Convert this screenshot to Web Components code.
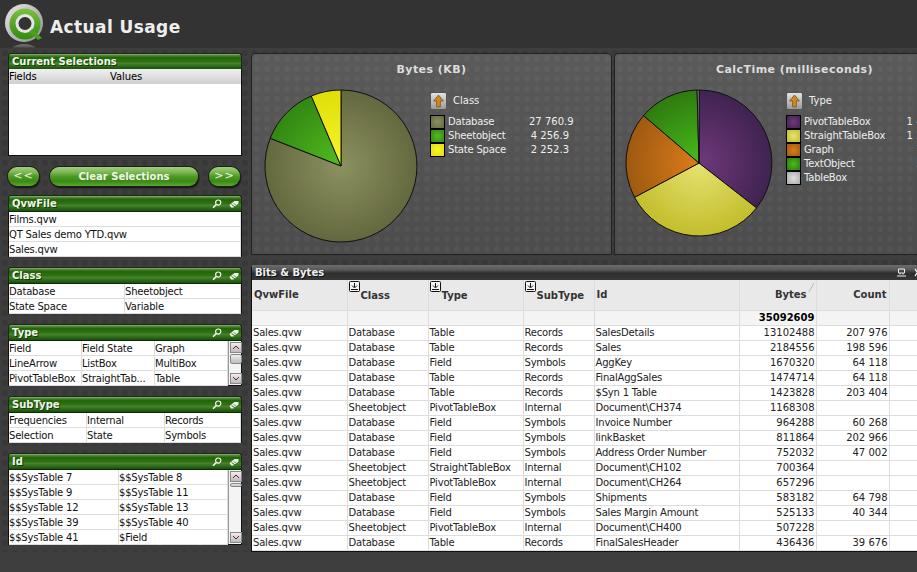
<!DOCTYPE html>
<html>
<head>
<meta charset="utf-8">
<title>Actual Usage</title>
<style>
  html, body { margin: 0; height: 100%; overflow: hidden; background: #3e3e3e; }
  body { font: 10px "DejaVu Sans", sans-serif; color: #000; }
</style>
</head>
<body>
<qv-app>
  <qv-topbar slot="top">Actual Usage</qv-topbar>

  <qv-selections slot="left"></qv-selections>
  <qv-buttons slot="left"></qv-buttons>

  <qv-listbox slot="left" columns="1fr" label="QvwFile">
    <span>Films.qvw</span><span>QT Sales demo YTD.qvw</span><span>Sales.qvw</span>
  </qv-listbox>
  <qv-listbox slot="left" columns="116px 1fr" label="Class" style="margin-top:10px">
    <span>Database</span><span>Sheetobject</span><span>State Space</span><span>Variable</span>
  </qv-listbox>
  <qv-listbox slot="left" columns="73px 73px 1fr" label="Type" scroll="type" style="margin-top:10px">
    <span>Field</span><span>Field State</span><span>Graph</span>
    <span>LineArrow</span><span>ListBox</span><span>MultiBox</span>
    <span>PivotTableBox</span><span>StraightTab...</span><span>Table</span>
  </qv-listbox>
  <qv-listbox slot="left" columns="78px 78px 1fr" label="SubType" style="margin-top:10px">
    <span>Frequencies</span><span>Internal</span><span>Records</span>
    <span>Selection</span><span>State</span><span>Symbols</span>
  </qv-listbox>
  <qv-listbox slot="left" columns="110px 1fr" label="Id" scroll="id" style="margin-top:10px">
    <span>$$SysTable 7</span><span>$$SysTable 8</span>
    <span>$$SysTable 9</span><span>$$SysTable 11</span>
    <span>$$SysTable 12</span><span>$$SysTable 13</span>
    <span>$$SysTable 39</span><span>$$SysTable 40</span>
    <span>$$SysTable 41</span><span>$Field</span>
  </qv-listbox>

  <qv-charts slot="right">
    <qv-pie label="Bytes (KB)" dim="Class" cx="89" cy="112" r="76" gap="13" nw="81" vw="40"
      slices='[["Database",0,291.4,"#8c9160","#64683e"],["Sheetobject",291.4,337,"#52bc20","#328712"],["State Space",337,360,"#f8f62e","#e0dd0a"]]'
      values="27 760.9|4 256.9|2 252.3"></qv-pie>
    <qv-pie label="CalcTime (milliseconds)" dim="Type" cx="84" cy="109" r="73" gap="14" nw="102.5" vw="51"
      slices='[["PivotTableBox",0,128,"#70387c","#3f2350"],["StraightTableBox",128,242,"#e6e272","#c2be2c"],["Graph",242,310.5,"#dc7c1a","#9e5a10"],["TextObject",310.5,358.5,"#48bc1a","#2f7a10"],["TableBox",358.5,360,"#e0e0e0","#a8a8a8"]]'
      values="1 438 226|1 226 508|742 118|512 930|"></qv-pie>
  </qv-charts>
  <qv-table slot="right" label="Bits &amp; Bytes"></qv-table>
</qv-app>

<script>
const STAR_BG = `radial-gradient(circle at 5px 5px, rgba(255,255,255,.035) 2.5px, transparent 3.5px) 0 0/10px 10px`;

const ICONS = {
  search: `<svg width="10" height="10" viewBox="0 0 10 10"><circle cx="6.2" cy="3.6" r="2.6" fill="none" stroke="#f2f6ee" stroke-width="1.2"/><path d="M4.2 5.6 1 8.8" stroke="#f2f6ee" stroke-width="1.6"/></svg>`,
  eraser: `<svg width="12" height="10" viewBox="0 0 11 10"><path d="M1 6 6 2h4v2.5L5 8.5H2.5z" fill="#f2f6ee"/><path d="M3 5.4 6.5 8" stroke="#2c6a10" stroke-width="1"/><path d="M5 4.4l3 2" stroke="#2c6a10" stroke-width=".7"/></svg>`
};

class QvApp extends HTMLElement {
  constructor() {
    super();
    this.attachShadow({ mode: 'open' });
    this.shadowRoot.innerHTML = `
      <style>
        :host { display: grid; grid-template-rows: 48px 1fr; width: 917px; height: 572px; overflow: hidden; background: #3e3e3e; }
        .main { display: flex; align-items: flex-start; padding-top: 5px; height: 499px;
                background: radial-gradient(circle at 5px 5px, rgba(0,0,0,.1) 2.5px, transparent 3.5px) 0 0/10px 10px; }
        .left { flex: 0 0 234px; width: 234px; margin-left: 8px; display: flex; flex-direction: column; }
        .right { flex: 0 0 700px; width: 700px; margin-left: 9px; display: flex; flex-direction: column; }
      </style>
      <slot name="top"></slot>
      <div class="main">
        <div class="left"><slot name="left"></slot></div>
        <div class="right"><slot name="right"></slot></div>
      </div>`;
  }
}

class QvTopbar extends HTMLElement {
  constructor() {
    super();
    this.attachShadow({ mode: 'open' });
    this.shadowRoot.innerHTML = `
      <style>
        :host { display: flex; align-items: flex-start; height: 48px; background: #333; overflow: hidden; }
        svg { flex: none; margin: 4px 0 0 5px; }
        .t { margin: 15px 0 0 6px; font: bold 17px/24px "DejaVu Sans", sans-serif; color: #eee; letter-spacing: .4px; }
      </style>
      <svg width="39" height="44" viewBox="0 0 39 44">
        <defs>
          <linearGradient id="ring" x1="0" y1="0" x2="1" y2="1"><stop offset="0" stop-color="#e8e8e8"/><stop offset="1" stop-color="#8e8e8e"/></linearGradient>
          <linearGradient id="gr" x1="0" y1="0" x2="0" y2="1"><stop offset="0" stop-color="#7cc142"/><stop offset="1" stop-color="#2f8a12"/></linearGradient>
          <linearGradient id="refl" x1="0" y1="0" x2="0" y2="1"><stop offset="0" stop-color="#999"/><stop offset="1" stop-color="#444"/></linearGradient>
        </defs>
        <path d="M7 44a13 6 0 0 1 24 0z" fill="url(#refl)" opacity=".75"/>
        <circle cx="19" cy="19" r="19" fill="url(#ring)"/>
        <circle cx="20" cy="20" r="15.5" fill="url(#gr)"/>
        <circle cx="20" cy="19.5" r="9.5" fill="#e4e4e4"/>
        <circle cx="20" cy="19.5" r="6.5" fill="#333"/>
        <path d="M27 25l10 9-4 2-9-8z" fill="#4d9e22"/>
      </svg>
      <div class="t"><slot></slot></div>`;
  }
}

class QvCaption extends HTMLElement {
  constructor() {
    super();
    this.attachShadow({ mode: 'open' });
    this.shadowRoot.innerHTML = `
      <style>
        :host { display: flex; align-items: center; height: 15px; padding: 0 1px 0 3px; border-radius: 3px 3px 0 0;
                border: 1px solid #1a2a12; border-bottom: 0; box-sizing: content-box;
                background: linear-gradient(#9ab98a 0, #55893a 8%, #24640a 24%, #2f7113 50%, #46842c 62%, #17500a 100%); }
        .t { flex: 1; font: bold 10px/15px "DejaVu Sans", sans-serif; color: #f0f4ea; text-shadow: 1px 1px 0 #123b05; white-space: nowrap; }
        .i { display: none; gap: 6px; align-items: center; height: 15px; }
        :host([icons]) .i { display: flex; }
      </style>
      <div class="t"><slot></slot></div>
      <div class="i">${ICONS.search}${ICONS.eraser}</div>`;
  }
}

class QvSelections extends HTMLElement {
  constructor() {
    super();
    this.attachShadow({ mode: 'open' });
    this.shadowRoot.innerHTML = `
      <style>
        :host { display: block; }
        .body { height: 86px; background: #fff; border: 1px solid #111; border-top: 0; }
        .head { display: grid; grid-template-columns: 101px 1fr; height: 15px; padding-left: 0;
                background: linear-gradient(#f0f0f0, #cfcfcf); font: 10px/16px "DejaVu Sans", sans-serif; color: #000; letter-spacing: -.1px; }
      </style>
      <qv-caption>Current Selections</qv-caption>
      <div class="body"><div class="head"><span>Fields</span><span>Values</span></div></div>`;
  }
}

class QvButtons extends HTMLElement {
  constructor() {
    super();
    this.attachShadow({ mode: 'open' });
    this.shadowRoot.innerHTML = `
      <style>
        :host { display: grid; grid-template-columns: 31px 148px 31px; gap: 11px; margin: 11px 0 9px; }
        div { height: 19px; border-radius: 9px; text-align: center; color: #f0f6ea; font: bold 10px/19px "DejaVu Sans", sans-serif;
              box-shadow: 0 0 0 1px #1c1c1c, 1px 2px 2px #111;
              background: linear-gradient(#a3cf7f 0, #7ab452 30%, #4c9a22 50%, #3a8a16 75%, #5aa830 100%); }
        .arr { font: 11px/18px "DejaVu Sans", sans-serif; letter-spacing: 1px; }
      </style>
      <div class="arr">&lt;&lt;</div><div>Clear Selections</div><div class="arr">&gt;&gt;</div>`;
  }
}

class QvScrollbar extends HTMLElement {
  constructor() {
    super();
    this.attachShadow({ mode: 'open' });
    const thumb = this.getAttribute('kind') === 'id' ? 'top:13px;height:2px' : 'top:13px;height:8px';
    const btn = d => `<svg width="10" height="9" viewBox="0 0 10 9"><path d="${d}" fill="none" stroke="#7a1c1c" stroke-width="1"/></svg>`;
    this.shadowRoot.innerHTML = `
      <style>
        :host { display: block; position: relative; background: #f4f4f4; border-left: 1px solid #999; box-sizing: border-box; }
        .b { position: absolute; left: 1px; width: 10px; height: 9px; border: 1px solid #888; background: linear-gradient(#eee, #bbb); display: flex; }
        .u { top: 1px; }
        .d { bottom: 1px; }
        .th { position: absolute; left: 1px; width: 10px; border: 1px solid #888; border-radius: 2px; background: linear-gradient(#ececec, #bdbdbd); }
      </style>
      <div class="b u">${btn('M2 6l3-3 3 3')}</div>
      <div class="th" style="${thumb}"></div>
      <div class="b d">${btn('M2 3l3 3 3-3')}</div>`;
  }
}

class QvListbox extends HTMLElement {
  constructor() {
    super();
    this.attachShadow({ mode: 'open' });
    const scroll = this.getAttribute('scroll');
    this.shadowRoot.innerHTML = `
      <style>
        :host { display: block; }
        .body { display: flex; background: #fff; border: 1px solid #111; border-top: 1px solid #0c2a04; }
        .grid { flex: 1; min-width: 0; display: grid; grid-template-columns: ${this.getAttribute('columns')}; margin-bottom: -1px; overflow: hidden; }
        ::slotted(span) { display: block; height: 14px; padding-left: 0; font: 10px/16px "DejaVu Sans", sans-serif; color: #111; letter-spacing: -.2px;
                          border-bottom: 1px solid #ddd; border-right: 1px solid #ddd; white-space: nowrap; overflow: hidden; }
        qv-scrollbar { flex: 0 0 13px; }
      </style>
      <qv-caption icons>${this.getAttribute('label')}</qv-caption>
      <div class="body"><div class="grid"><slot></slot></div>${scroll ? `<qv-scrollbar kind="${scroll}"></qv-scrollbar>` : ''}</div>`;
  }
}

class QvCharts extends HTMLElement {
  constructor() {
    super();
    this.attachShadow({ mode: 'open' });
    this.shadowRoot.innerHTML = `
      <style>:host { display: flex; gap: 2px; margin-bottom: 10px; height: 202px; }</style>
      <slot></slot>`;
  }
}

class QvPie extends HTMLElement {
  constructor() {
    super();
    this.attachShadow({ mode: 'open' });
    const a = n => this.getAttribute(n);
    const cx = +a('cx'), cy = +a('cy'), r = +a('r');
    const slices = JSON.parse(a('slices'));
    const values = a('values').split('|');
    const pt = d => {
      const t = d * Math.PI / 180;
      return `${(cx + r * Math.sin(t)).toFixed(1)} ${(cy - r * Math.cos(t)).toFixed(1)}`;
    };
    const grads = slices.map((s, i) => `<radialGradient id="g${i}" gradientUnits="userSpaceOnUse" cx="${cx}" cy="${cy}" r="${r}"><stop offset="0" stop-color="${s[3]}"/><stop offset="1" stop-color="${s[4]}"/></radialGradient>`).join('');
    const paths = slices.map((s, i) => `<path d="M${cx} ${cy}L${pt(s[1])}A${r} ${r} 0 ${s[2] - s[1] > 180 ? 1 : 0} 1 ${pt(s[2])}Z" fill="url(#g${i})" stroke="#111" stroke-width="1"/>`).join('');
    const legend = slices.map((s, i) => `<div class="row"><i style="background:radial-gradient(circle,${s[3]},${s[4]})"></i><span class="n">${s[0]}</span><span class="v">${values[i]}</span></div>`).join('');
    this.shadowRoot.innerHTML = `
      <style>
        :host { display: block; position: relative; flex: 0 0 361px; box-sizing: border-box; height: 202px;
                background: ${STAR_BG}, linear-gradient(#5a5a5a, #4c4c4c);
                border: 1px solid #222; border-radius: 4px 4px 0 0; color: #eee; overflow: hidden; }
        .title { text-align: center; font: bold 11px/16px "DejaVu Sans", sans-serif; color: #ddd; letter-spacing: .45px; padding-top: 8px; }
        svg.pie { position: absolute; left: 0; top: 0; }
        .legend { position: absolute; top: 38px; left: calc(${cx}px + ${r}px + ${a('gap')}px); font: 10px/14px "DejaVu Sans", sans-serif; }
        .dim { display: flex; align-items: center; gap: 6px; height: 18px; margin-bottom: 5px; }
        .up { width: 15px; height: 16px; border: 1px solid #555; border-radius: 2px; background: linear-gradient(#e2e2e2, #9a9a9a); display: flex; align-items: center; justify-content: center; }
        .row { display: flex; align-items: center; height: 14px; white-space: nowrap; }
        i { flex: none; width: 13px; height: 12px; border: 1px solid #000; margin-right: 3px; }
        .n { width: ${a('nw')}px; letter-spacing: -.2px; }
        .v { flex: none; width: ${a('vw')}px; text-align: right; }
      </style>
      <div class="title">${a('label')}</div>
      <svg class="pie" width="300" height="200"><defs>${grads}</defs>${paths}</svg>
      <div class="legend">
        <div class="dim"><div class="up"><svg width="13" height="14" viewBox="0 0 11 13"><path d="M5.5 1 10 6.5H7.2V12H3.8V6.5H1z" fill="#d08a20" stroke="#7a4c0c" stroke-width=".7"/></svg></div><span>${a('dim')}</span></div>
        ${legend}
      </div>`;
  }
}

const TABLE_ROWS = [
  ['Database','Table','Records','SalesDetails','13102488','207 976'],
  ['Database','Table','Records','Sales','2184556','198 596'],
  ['Database','Field','Symbols','AggKey','1670320','64 118'],
  ['Database','Table','Records','FinalAggSales','1474714','64 118'],
  ['Database','Table','Records','$Syn 1 Table','1423828','203 404'],
  ['Sheetobject','PivotTableBox','Internal','Document\\CH374','1168308',''],
  ['Database','Field','Symbols','Invoice Number','964288','60 268'],
  ['Database','Field','Symbols','linkBasket','811864','202 966'],
  ['Database','Field','Symbols','Address Order Number','752032','47 002'],
  ['Sheetobject','StraightTableBox','Internal','Document\\CH102','700364',''],
  ['Sheetobject','PivotTableBox','Internal','Document\\CH264','657296',''],
  ['Database','Field','Symbols','Shipments','583182','64 798'],
  ['Database','Field','Symbols','Sales Margin Amount','525133','40 344'],
  ['Sheetobject','PivotTableBox','Internal','Document\\CH400','507228',''],
  ['Database','Table','Records','FinalSalesHeader','436436','39 676']
];

class QvTable extends HTMLElement {
  constructor() {
    super();
    this.attachShadow({ mode: 'open' });
    const drop = `<svg class="drop" width="11" height="11" viewBox="0 0 11 11"><rect x=".5" y=".5" width="10" height="10" rx="1" fill="#f4f4f4" stroke="#111"/><path d="M5.5 2v4M3 4.5 5.5 7 8 4.5" fill="none" stroke="#111"/><path d="M2 8.5h7" stroke="#111"/></svg>`;
    const cells = TABLE_ROWS.map(r => `<tr>
      <td>Sales.qvw</td><td>${r[0]}</td><td>${r[1]}</td><td>${r[2]}</td><td>${r[3]}</td>
      <td class="num">${r[4]}</td><td class="num">${r[5]}</td><td></td></tr>`).join('');
    this.shadowRoot.innerHTML = `
      <style>
        :host { display: block; width: 700px; height: 287px; box-sizing: border-box; border: 1px solid #111; border-top: 0; border-radius: 3px 0 0 0; overflow: hidden; background: #fff; }
        .cap { display: flex; align-items: center; justify-content: space-between; height: 15px; padding: 0 0 0 3px; color: #f0f0f0;
               font: bold 10px/15px "DejaVu Sans", sans-serif; background: linear-gradient(#6c6c6c, #5a5a5a 30%, #2e2e2e 55%, #383838 100%); text-shadow: 1px 1px 0 #111; }
        .tools { display: flex; gap: 8px; margin-right: 29px; }
        table { border-collapse: collapse; table-layout: fixed; width: 698px; font: 10px/14px "DejaVu Sans", sans-serif; color: #222; }
        td, th { padding: 0 1px; height: 14px; border-bottom: 1px solid #ddd; border-right: 1px solid #ddd; white-space: nowrap; overflow: hidden; box-sizing: content-box; letter-spacing: -.2px; }
        th { position: relative; height: 28px; background: #e9e9e9; font-weight: bold; text-align: left; color: #333; padding-left: 2px; letter-spacing: 0; }
        .total td { background: #f4f4f4; font-weight: bold; color: #000; letter-spacing: 0; }
        .num { text-align: right; letter-spacing: 0; }
        th.num { text-align: right; padding-right: 2px; }
        .drop { position: absolute; left: 1px; top: 1px; }
        th.d { padding-left: 13px; padding-top: 2px; }
        .sort { position: absolute; right: 1px; top: 3px; }
      </style>
      <div class="cap"><span>${this.getAttribute('label').replace('&', '&amp;')}</span>
        <div class="tools">
          <svg width="9" height="9" viewBox="0 0 9 9"><path d="M1.5 1h6v4h-6zM0 8h9M3 5v1.5M6 5v1.5" fill="none" stroke="#eee"/></svg>
          <svg width="7" height="9" viewBox="0 0 7 9"><path d="M1 1l5 7M6 1 1 8" fill="none" stroke="#eee" stroke-width="1.3"/></svg>
        </div></div>
      <table>
        <colgroup><col style="width:95px"><col style="width:81px"><col style="width:95px"><col style="width:71px"><col style="width:145px"><col style="width:77px"><col style="width:73px"><col style="width:61px"></colgroup>
        <tr><th>QvwFile</th><th class="d">${drop}Class</th><th class="d">${drop}Type</th><th class="d">${drop}SubType</th><th>Id</th>
          <th class="num">Bytes&nbsp;&nbsp;<svg class="sort" width="8" height="10" viewBox="0 0 8 10"><path d="M7 0 2 9" stroke="#bbb"/></svg></th><th class="num">Count</th><th></th></tr>
        <tr class="total"><td></td><td></td><td></td><td></td><td></td><td class="num">35092609</td><td></td><td></td></tr>
        ${cells}
      </table>`;
  }
}

customElements.define('qv-topbar', QvTopbar);
customElements.define('qv-caption', QvCaption);
customElements.define('qv-selections', QvSelections);
customElements.define('qv-buttons', QvButtons);
customElements.define('qv-scrollbar', QvScrollbar);
customElements.define('qv-listbox', QvListbox);
customElements.define('qv-charts', QvCharts);
customElements.define('qv-pie', QvPie);
customElements.define('qv-table', QvTable);
customElements.define('qv-app', QvApp);
</script>
</body>
</html>
